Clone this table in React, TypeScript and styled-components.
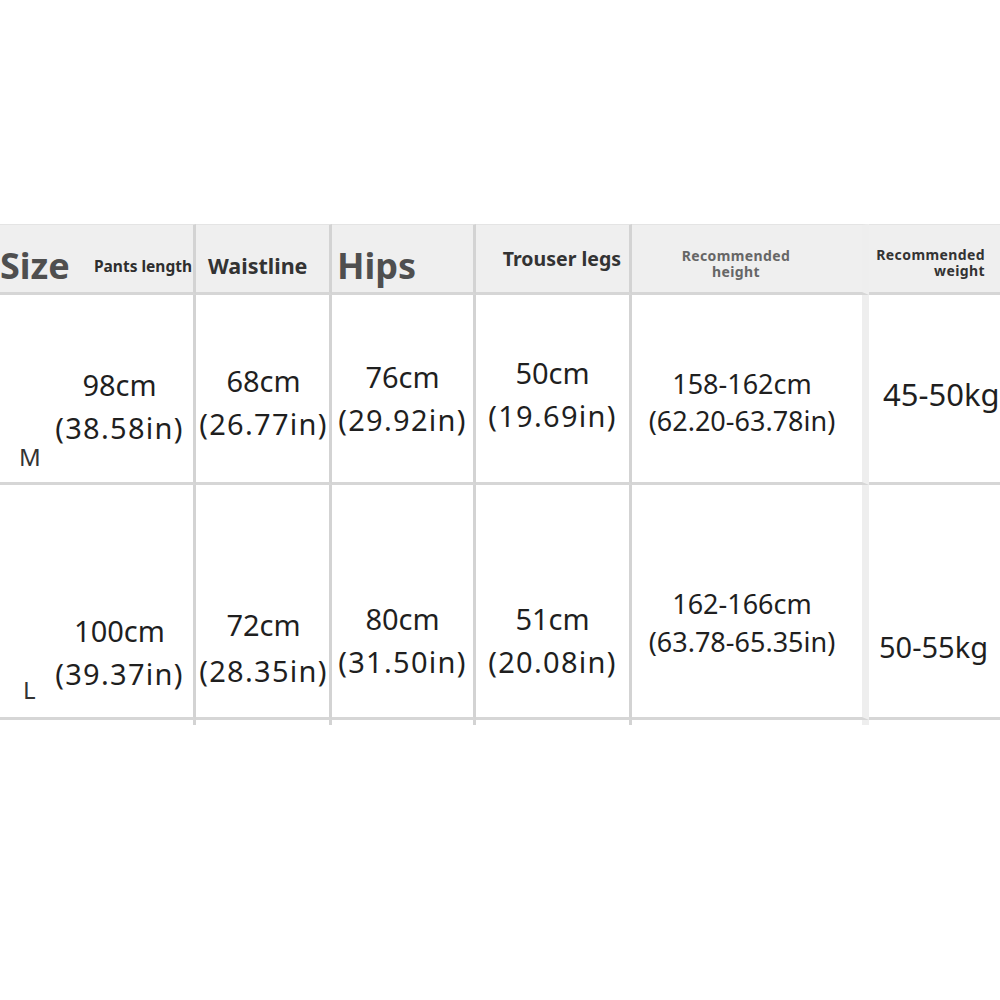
import React from "react";
import styled, { createGlobalStyle } from "styled-components";

type Edge = "line" | "band" | "none";

interface BodyValue {
  top: number;
  lines: string[];
  size?: number;
  lh?: number;
  align?: "center" | "start";
  pl?: number;
  pr?: number;
}

interface SizeRow {
  label: string;
  labelBottom: number;
  labelLeft: number;
  length: BodyValue;
  values: BodyValue[];
}

const edges: Edge[] = ["line", "line", "line", "line", "band", "none"];

const rows: SizeRow[] = [
  {
    label: "M",
    labelBottom: 10,
    labelLeft: 19,
    length: { top: 68, lines: ["98cm", "(38.58in)"] },
    values: [
      { top: 64, lines: ["68cm", "(26.77in)"], pl: 2 },
      { top: 60, lines: ["76cm", "(29.92in)"] },
      { top: 56, lines: ["50cm", "(19.69in)"] },
      { top: 70, lines: ["158-162cm", "(62.20-63.78in)"], size: 27, lh: 37, pr: 10 },
      { top: 78, lines: ["45-50kg"], size: 31, align: "start", pl: 14 },
    ],
  },
  {
    label: "L",
    labelBottom: 12,
    labelLeft: 23,
    length: { top: 124, lines: ["100cm", "(39.37in)"] },
    values: [
      { top: 117, lines: ["72cm", "(28.35in)"], lh: 46, pl: 2 },
      { top: 112, lines: ["80cm", "(31.50in)"] },
      { top: 112, lines: ["51cm", "(20.08in)"] },
      { top: 100, lines: ["162-166cm", "(63.78-65.35in)"], size: 27, lh: 38, pr: 10 },
      { top: 140, lines: ["50-55kg"], align: "start", pl: 10 },
    ],
  },
];

const SizeChart = () => {
  return (
    <Page>
      <GlobalStyle />
      <Table>
        <HeadCell $edge="line" $justify="space-between" $pt={14}>
          <SizeTitle>Size</SizeTitle>
          <SmallHead>Pants length</SmallHead>
        </HeadCell>
        <HeadCell $edge="line" $pl={12} $pt={14}>
          <MidHead>Waistline</MidHead>
        </HeadCell>
        <HeadCell $edge="line" $pl={5} $pt={14}>
          <SizeTitle>Hips</SizeTitle>
        </HeadCell>
        <HeadCell $edge="line" $justify="flex-end" $pr={8}>
          <MidHead $size={19.5}>Trouser legs</MidHead>
        </HeadCell>
        <HeadCell $edge="band" $justify="center" $pr={22} $pt={10}>
          <NoteHead $muted>
            <NoteLine>Recommended</NoteLine>
            <NoteLine>height</NoteLine>
          </NoteHead>
        </HeadCell>
        <HeadCell $edge="none" $justify="flex-end" $pr={15} $pt={9}>
          <NoteHead $right>
            <NoteLine>Recommended</NoteLine>
            <NoteLine>weight</NoteLine>
          </NoteHead>
        </HeadCell>

        {rows.map((row) => (
          <React.Fragment key={row.label}>
            <FirstCell>
              <SizeLabel $bottom={row.labelBottom} $left={row.labelLeft}>
                {row.label}
              </SizeLabel>
              <ValueStack $pt={row.length.top}>
                {row.length.lines.map((line) => (
                  <ValueLine key={line} $wide={line.startsWith("(")}>
                    {line}
                  </ValueLine>
                ))}
              </ValueStack>
            </FirstCell>
            {row.values.map((v, i) => (
              <BodyCell
                key={v.lines[0]}
                $edge={edges[i + 1]}
                $pt={v.top}
                $align={v.align || "center"}
                $pl={v.pl || 0}
                $pr={v.pr || 0}
              >
                {v.lines.map((line) => (
                  <ValueLine
                    key={line}
                    $size={v.size}
                    $lh={v.lh}
                    $wide={line.startsWith("(") && !v.size}
                  >
                    {line}
                  </ValueLine>
                ))}
              </BodyCell>
            ))}
          </React.Fragment>
        ))}

        {edges.map((edge, i) => (
          <TailCell key={i} $edge={edge} />
        ))}
      </Table>
    </Page>
  );
};

const GlobalStyle = createGlobalStyle`
  html, body {
    margin: 0;
    padding: 0;
    background: #ffffff;
  }
  body {
    font-family: "Noto Sans", "Open Sans", sans-serif;
    color: #222222;
  }
`;

const edgeBorder = (edge: Edge) => {
  if (edge === "line") return "border-right: 3px solid #d3d3d3;";
  if (edge === "band") return "border-right: 7px solid #eeeeee;";
  return "";
};

const Page = styled.div`
  width: 1000px;
  height: 1000px;
  overflow: hidden;
  padding-top: 224px;
  box-sizing: border-box;
`;

const Table = styled.div`
  display: grid;
  grid-template-columns: 196px 136px 144px 156px 237px 131px;
  grid-template-rows: 71px 190px 235px 5px;
`;

const HeadCell = styled.div<{
  $edge: Edge;
  $justify?: string;
  $pl?: number;
  $pr?: number;
  $pt?: number;
}>`
  box-sizing: border-box;
  display: flex;
  align-items: center;
  justify-content: ${(p) => p.$justify || "flex-start"};
  padding: ${(p) => p.$pt || 0}px ${(p) => p.$pr || 0}px 0 ${(p) => p.$pl || 0}px;
  background-color: #efefef;
  border-top: 1px solid #e4e4e4;
  border-bottom: 3px solid #d6d6d6;
  ${(p) => edgeBorder(p.$edge)}
  white-space: nowrap;
`;

const SizeTitle = styled.span`
  font-size: 36px;
  font-weight: 700;
  color: #4f4f4f;
  line-height: 1;
`;

const SmallHead = styled.span`
  font-size: 15.5px;
  font-weight: 700;
  color: #2e2e2e;
  padding-right: 1px;
`;

const MidHead = styled.span<{ $size?: number }>`
  font-size: ${(p) => p.$size || 21.5}px;
  font-weight: 700;
  color: #333333;
`;

const NoteHead = styled.div<{ $muted?: boolean; $right?: boolean }>`
  display: flex;
  flex-direction: column;
  align-items: ${(p) => (p.$right ? "flex-end" : "center")};
  color: ${(p) => (p.$muted ? "#666666" : "#333333")};
`;

const NoteLine = styled.span`
  display: block;
  font-size: 14px;
  line-height: 16px;
  letter-spacing: 0.4px;
  font-weight: 700;
`;

const FirstCell = styled.div`
  box-sizing: border-box;
  display: grid;
  grid-template-columns: 46px 1fr;
  border-right: 3px solid #d3d3d3;
  border-bottom: 3px solid #d6d6d6;
`;

const SizeLabel = styled.span<{ $bottom: number; $left: number }>`
  align-self: end;
  padding: 0 0 ${(p) => p.$bottom}px ${(p) => p.$left}px;
  font-size: 24px;
  line-height: 30px;
  color: #333333;
`;

const ValueStack = styled.div<{ $pt: number }>`
  display: flex;
  flex-direction: column;
  align-items: center;
  padding-top: ${(p) => p.$pt}px;
`;

const BodyCell = styled.div<{
  $edge: Edge;
  $pt: number;
  $align: "center" | "start";
  $pl: number;
  $pr: number;
}>`
  box-sizing: border-box;
  display: flex;
  flex-direction: column;
  align-items: ${(p) => (p.$align === "start" ? "flex-start" : "center")};
  padding: ${(p) => p.$pt}px ${(p) => p.$pr}px 0 ${(p) => p.$pl}px;
  border-bottom: 3px solid #d6d6d6;
  ${(p) => edgeBorder(p.$edge)}
`;

const ValueLine = styled.span<{ $size?: number; $lh?: number; $wide?: boolean }>`
  display: block;
  font-size: ${(p) => p.$size || 29}px;
  line-height: ${(p) => p.$lh || 43}px;
  letter-spacing: ${(p) => (p.$wide ? "1.3px" : "0")};
  white-space: nowrap;
  color: #1f1f1f;
`;

const TailCell = styled.div<{ $edge: Edge }>`
  box-sizing: border-box;
  ${(p) => edgeBorder(p.$edge)}
`;

export default SizeChart;
